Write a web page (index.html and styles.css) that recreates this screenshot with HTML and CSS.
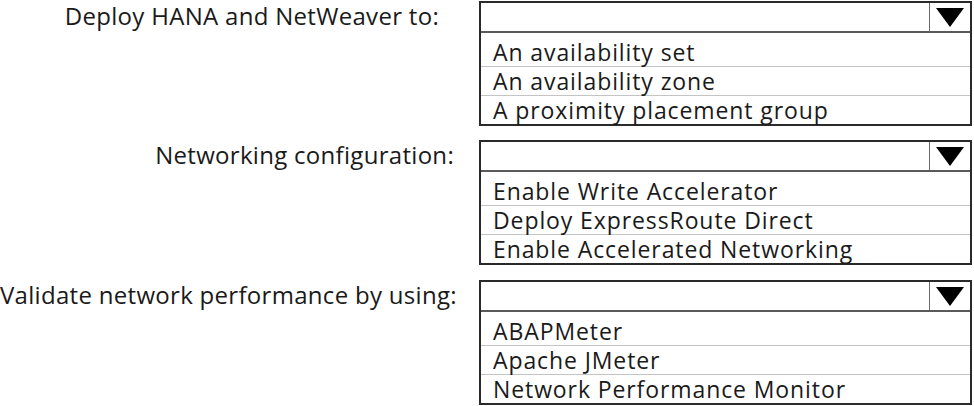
FILE: index.html
```html
<!DOCTYPE html>
<html lang="en">
<head>
    <meta charset="UTF-8">
    <title>Answer Area</title>
    <link rel="stylesheet" href="styles.css">
</head>
<body>
    <main class="answer-area">
        <div class="row row-first">
            <div class="label label-deploy">Deploy HANA and NetWeaver to:</div>
            <div class="dropdown">
                <div class="select">
                    <div class="value"></div>
                    <div class="arrow"><svg width="28" height="19" viewBox="0 0 28 19"><polygon points="0,0 28,0 14,19" fill="#000"/></svg></div>
                </div>
                <ul class="options">
                    <li>An availability set</li>
                    <li>An availability zone</li>
                    <li>A proximity placement group</li>
                </ul>
            </div>
        </div>
        <div class="row row-second">
            <div class="label">Networking configuration:</div>
            <div class="dropdown">
                <div class="select">
                    <div class="value"></div>
                    <div class="arrow"><svg width="28" height="19" viewBox="0 0 28 19"><polygon points="0,0 28,0 14,19" fill="#000"/></svg></div>
                </div>
                <ul class="options">
                    <li>Enable Write Accelerator</li>
                    <li>Deploy ExpressRoute Direct</li>
                    <li>Enable Accelerated Networking</li>
                </ul>
            </div>
        </div>
        <div class="row row-third">
            <div class="label">Validate network performance by using:</div>
            <div class="dropdown">
                <div class="select">
                    <div class="value"></div>
                    <div class="arrow"><svg width="28" height="19" viewBox="0 0 28 19"><polygon points="0,0 28,0 14,19" fill="#000"/></svg></div>
                </div>
                <ul class="options">
                    <li>ABAPMeter</li>
                    <li>Apache JMeter</li>
                    <li>Network Performance Monitor</li>
                </ul>
            </div>
        </div>
    </main>
</body>
</html>
```
FILE: styles.css
```css
body {
    margin: 0;
    padding: 0;
    background-color: #fff;
    color: #1a1a1a;
    font-family: "Open Sans", "Noto Sans", sans-serif;
}

.answer-area {
    padding: 1px 2px 0 0;
}

.row {
    display: grid;
    grid-template-columns: 479px 1fr;
}

.row-second {
    margin-top: 14px;
}

.row-third {
    margin-top: 15px;
}

.label {
    text-align: right;
    padding-right: 25px;
    font-size: 24px;
    letter-spacing: 0.3px;
    line-height: 30px;
    white-space: nowrap;
}

.label-deploy {
    padding-right: 40px;
}

.dropdown {
    border: 2px solid #2a2a2a;
}

.select {
    display: flex;
    height: 28px;
    border-bottom: 2px solid #5a5a5a;
}

.value {
    flex: 1;
}

.arrow {
    width: 40px;
    border-left: 1px solid #6a6a6a;
    display: flex;
    justify-content: center;
    align-items: center;
}

.options {
    list-style: none;
    margin: 0;
    padding: 5px 0 0 0;
}

.options li {
    height: 28px;
    line-height: 28px;
    padding-left: 12px;
    font-size: 23px;
    letter-spacing: 0.9px;
    border-bottom: 1px solid #c4c4c4;
    white-space: nowrap;
}

.options li:last-child {
    border-bottom: none;
}
```
